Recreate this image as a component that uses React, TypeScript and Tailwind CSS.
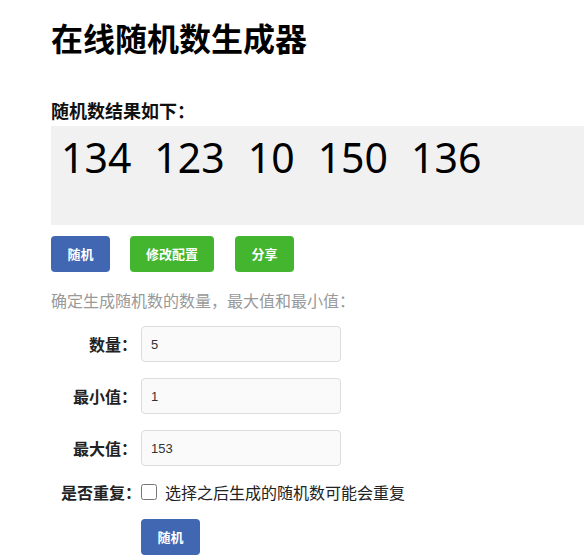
const cjk = { fontFamily: '"Noto Sans CJK SC", "Noto Sans", sans-serif' };

const nums = [134, 123, 10, 150, 136];

const Field = ({ label, value }: { label: string; value: string }) => (
  <div className="flex items-center h-[36px]">
    <label className="w-[86px] text-right text-[16px] font-bold text-[#222]">{label}</label>
    <input
      className="ml-[4px] w-[200px] h-[36px] px-[9px] bg-[#fafafa] border border-[#dcdcdc] rounded-[4px] text-[13px] text-[#333] outline-none"
      style={{ fontFamily: '"Liberation Sans", Arial, sans-serif' }}
      defaultValue={value}
    />
  </div>
);

export default function App() {
  return (
    <div className="w-[584px] h-[557px] overflow-hidden bg-white pl-[51px]" style={cjk}>
      <h1 className="pt-[13px] text-[32px] leading-[48px] font-bold text-black">在线随机数生成器</h1>
      <h2 className="mt-[36px] text-[18px] leading-[27px] font-bold text-[#111]">随机数结果如下：</h2>
      <div className="mt-[2px] h-[99px] w-[560px] bg-[#f1f1f1] pl-[10px] pt-[4px]">
        <div
          className="flex gap-[23px] text-[41px] leading-[54px] text-black"
          style={{ fontFamily: '"Noto Sans", sans-serif' }}
        >
          {nums.map((n, i) => (
            <span key={i}>{n}</span>
          ))}
        </div>
      </div>
      <div className="mt-[11px] flex gap-[20px]">
        <button className="h-[36px] w-[59px] rounded-[4px] bg-[#4267b2] text-white text-[13px] font-bold">随机</button>
        <button className="h-[36px] w-[84px] rounded-[4px] bg-[#44b52f] text-white text-[13px] font-bold">修改配置</button>
        <button className="ml-[1px] h-[36px] w-[59px] rounded-[4px] bg-[#44b52f] text-white text-[13px] font-bold">分享</button>
      </div>
      <p className="mt-[16px] text-[16px] leading-[24px] text-[#999]">确定生成随机数的数量，最大值和最小值：</p>
      <div className="mt-[14px] flex flex-col gap-[16px]">
        <Field label="数量：" value="5" />
        <Field label="最小值：" value="1" />
        <Field label="最大值：" value="153" />
      </div>
      <div className="mt-[14px] flex items-center h-[24px]">
        <span className="w-[90px] text-right text-[16px] font-bold text-[#222]">是否重复：</span>
        <input type="checkbox" className="w-[16px] h-[16px] m-0" />
        <span className="ml-[8px] text-[16px] text-[#222]">选择之后生成的随机数可能会重复</span>
      </div>
      <div className="mt-[15px] pl-[90px]">
        <button className="h-[36px] w-[59px] rounded-[4px] bg-[#4267b2] text-white text-[13px] font-bold">随机</button>
      </div>
    </div>
  );
}
